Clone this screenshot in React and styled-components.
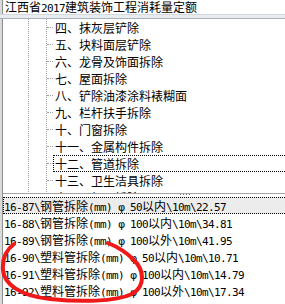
import React from "react";
import styled, { createGlobalStyle } from "styled-components";

const GlobalStyle = createGlobalStyle`
  html, body {
    margin: 0;
    padding: 0;
    background: #fff;
  }
  body {
    width: 285px;
    height: 304px;
    overflow: hidden;
  }
`;

const Window = styled.div`
  position: relative;
  width: 285px;
  height: 304px;
  box-sizing: border-box;
  padding-left: 3px;
  overflow: hidden;
  display: flex;
  flex-direction: column;
  background: #fff;
  box-shadow: inset 2px 0 0 #dadada, inset 3px 0 0 #8e8e8e;
  font-family: "Noto Sans CJK SC", sans-serif;
  font-size: 12px;
  color: #000;
  white-space: pre;
`;

const TitleBar = styled.div`
  height: 14px;
  line-height: 14px;
  padding-left: 2px;
  flex-shrink: 0;
`;

const Divider = styled.div`
  height: 3px;
  flex-shrink: 0;
  margin-left: -3px;
  background: #e8ecf1;
  border-top: 1px solid #d3d8dd;
  border-bottom: 1px solid #a8b0b9;
`;

const TreePanel = styled.div`
  height: 174px;
  flex-shrink: 0;
  overflow: hidden;
  background-image: repeating-linear-gradient(to bottom, #a0a0a0 0 1px, transparent 1px 2px),
    repeating-linear-gradient(to bottom, #a0a0a0 0 1px, transparent 1px 2px);
  background-size: 1px 100%, 1px 100%;
  background-position: 25px 0, 43px 0;
  background-repeat: no-repeat;
`;

const TreeRow = styled.div`
  height: 17px;
  display: flex;
  align-items: center;
  padding-left: 44px;
`;

const Connector = styled.span`
  width: 6px;
  height: 0;
  border-top: 1px dotted #a0a0a0;
  flex-shrink: 0;
`;

const TreeLabel = styled.span`
  flex: 1;
  height: 17px;
  box-sizing: border-box;
  line-height: 15px;
  padding-left: 1px;
  border: 1px dotted ${(p) => (p.$focused ? "#000" : "transparent")};
  border-right: none;
`;

const Splitter = styled.div`
  height: 3px;
  flex-shrink: 0;
  border-top: 1px solid #a2a2a2;
  display: flex;
  align-items: flex-start;
`;

const Grip = styled.span`
  margin-left: 177px;
  width: 11px;
  height: 1px;
  background: repeating-linear-gradient(to right, #7a7a7a 0 1px, transparent 1px 3px);
`;

const ListPanel = styled.div`
  flex: 1;
  display: flex;
  flex-direction: column;
`;

const ListRow = styled.div`
  height: 17px;
  box-sizing: border-box;
  line-height: 15px;
  flex-shrink: 0;
  border: 1px dotted ${(p) => (p.$focused ? "#000" : "transparent")};
  border-right: none;
  background: ${(p) => (p.$focused ? "#ececec" : "transparent")};
`;

const Half = styled.span`
  font-family: "DejaVu Sans Mono", monospace;
  font-size: 11px;
  letter-spacing: -0.62px;
`;

const Wide = styled.span`
  display: inline-block;
  width: 12px;
  font-family: "DejaVu Sans", sans-serif;
  font-size: 11px;
`;

const Annotation = styled.svg`
  position: absolute;
  left: 0;
  top: 0;
  pointer-events: none;
`;

function Mixed({ text }) {
  const parts = text.match(/[\x00-\x7f]+|φ|[^\x00-\x7fφ]+/g);
  return parts.map((p, i) => {
    if (p === "φ") return <Wide key={i}>{p}</Wide>;
    if (/^[\x00-\x7f]+$/.test(p)) return <Half key={i}>{p}</Half>;
    return <span key={i}>{p}</span>;
  });
}

const chapters = [
  "四、抹灰层铲除",
  "五、块料面层铲除",
  "六、龙骨及饰面拆除",
  "七、屋面拆除",
  "八、铲除油漆涂料裱糊面",
  "九、栏杆扶手拆除",
  "十、门窗拆除",
  "十一、金属构件拆除",
  "十二、管道拆除",
  "十三、卫生洁具拆除",
  "十四、灯具拆除",
];

const items = [
  "16-87\\钢管拆除(mm) φ50以内\\10m\\22.57",
  "16-88\\钢管拆除(mm) φ100以内\\10m\\34.81",
  "16-89\\钢管拆除(mm) φ100以外\\10m\\41.95",
  "16-90\\塑料管拆除(mm) φ50以内\\10m\\10.71",
  "16-91\\塑料管拆除(mm) φ100以内\\10m\\14.79",
  "16-92\\塑料管拆除(mm) φ100以外\\10m\\17.34",
];

export default function App() {
  return (
    <Window>
      <GlobalStyle />
      <TitleBar>
        <Mixed text="江西省2017建筑装饰工程消耗量定额" />
      </TitleBar>
      <Divider />
      <TreePanel>
        {chapters.map((c) => (
          <TreeRow key={c}>
            <Connector />
            <TreeLabel $focused={c === "十二、管道拆除"}>{c}</TreeLabel>
          </TreeRow>
        ))}
      </TreePanel>
      <Splitter>
        <Grip />
      </Splitter>
      <ListPanel>
        {items.map((t, i) => (
          <ListRow key={t} $focused={i === 0}>
            <Mixed text={t} />
          </ListRow>
        ))}
      </ListPanel>
      <Annotation width="285" height="304" viewBox="0 0 285 304">
        <path
          d="M 14 244 C 6 250, 2 258, 3 270 C 4 284, 20 296, 50 299 C 80 302, 115 302, 132 294 C 146 286, 144 270, 134 260 C 126 252, 118 247, 108 243"
          fill="none"
          stroke="#f01818"
          strokeWidth="4"
          strokeLinecap="round"
        />
      </Annotation>
    </Window>
  );
}
